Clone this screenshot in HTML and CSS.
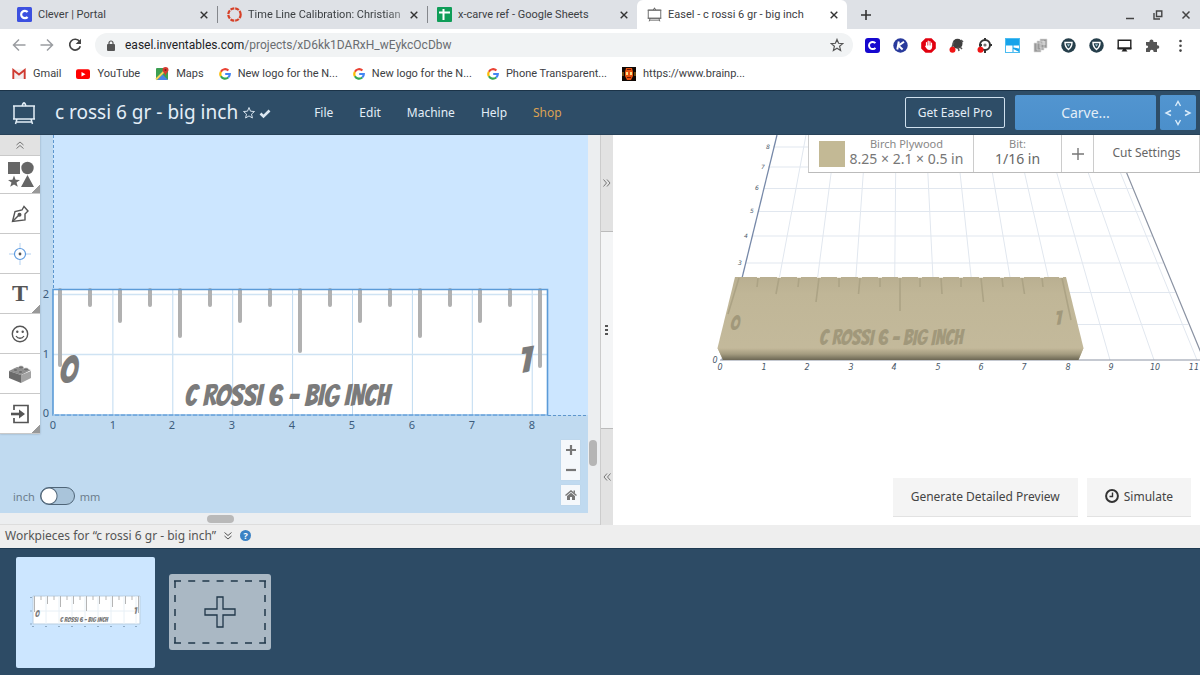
FILE: index.html
```html
<!DOCTYPE html>
<html lang="en">
<head>
<meta charset="utf-8">
<title>Easel - c rossi 6 gr - big inch</title>
<meta name="viewport" content="width=device-width, initial-scale=1">
<link rel="stylesheet" href="styles.css">
</head>
<body>
<svg class="defs" width="0" height="0" aria-hidden="true">
  <defs>
    <symbol id="close" viewBox="0 0 8 8"><path d="M.7.7l6.6 6.6M7.3.7L.7 7.3" stroke="#333" stroke-width="1.4" fill="none"/></symbol>
    <symbol id="google" viewBox="0 0 12 12"><g fill="none" stroke-width="2.2"><path d="M9.4 2.5A4.8 4.8 0 0 0 1.9 3.7" stroke="#ea4335"/><path d="M1.9 3.7a4.8 4.8 0 0 0 0 4.6" stroke="#fbbc05"/><path d="M1.9 8.3a4.8 4.8 0 0 0 7.3 1.2" stroke="#34a853"/><path d="M9.2 9.5A4.5 4.5 0 0 0 10.8 6H6.2" stroke="#4285f4"/></g></symbol>
    <symbol id="shield" viewBox="0 0 15 15"><circle cx="7.5" cy="7.5" r="7.2" fill="#263f4b"/><path d="M4 4.5h7c0 3.500-1.500 5.500-3.500 7C5.500 10 4 8 4 4.500z" fill="none" stroke="#fff" stroke-width="1.400"/><path d="M6 6.200h3L7.500 8.700z" fill="#9fc6d2"/></symbol>
    <symbol id="easel" viewBox="0 0 24 24"><g fill="none" stroke="currentColor" stroke-width="1.500"><path d="M2 5h20v13H2zM1 5h22M1 18h22M5 18l-1.500 5M19 18l1.500 5M4 21h16"/><path d="M10 5l1-2.500h2L14 5M12 1v2"/></g></symbol>
    <linearGradient id="woodEdge" x1="0" y1="0" x2="0" y2="1"><stop offset="0" stop-color="#c4b99b"/><stop offset=".5" stop-color="#a49c80"/><stop offset="1" stop-color="#6c6754"/></linearGradient>
    <linearGradient id="woodTop" x1="0" y1="0" x2="0" y2="1"><stop offset="0" stop-color="#b9af91"/><stop offset=".2" stop-color="#c0b697"/><stop offset="1" stop-color="#c4ba9c"/></linearGradient>
  </defs>
</svg>

<header class="browser">
  <div class="tabstrip">
    <div class="tab">
      <svg class="fav" viewBox="0 0 15 15"><rect width="15" height="15" rx="1.500" fill="#3c50e0"/><path d="M10.600 5A3.700 3.700 0 1 0 10.600 10" fill="none" stroke="#fff" stroke-width="2.200"/></svg>
      <span class="tab-title">Clever | Portal</span>
      <button class="close" aria-label="Close tab"><svg><use href="#close"/></svg></button>
    </div>
    <div class="tab divided">
      <svg class="fav" viewBox="0 0 15 15"><circle cx="7.500" cy="7.500" r="6.200" fill="none" stroke="#d64027" stroke-width="2.200" stroke-dasharray="3.900 .97"/></svg>
      <span class="tab-title fade">Time Line Calibration: Christian</span>
      <button class="close" aria-label="Close tab"><svg><use href="#close"/></svg></button>
    </div>
    <div class="tab divided">
      <svg class="fav" viewBox="0 0 15 15"><rect width="15" height="15" rx="1" fill="#0f9d58"/><path d="M2 5.500h11M6.500 2v11" stroke="#fff" stroke-width="2"/></svg>
      <span class="tab-title">x-carve ref - Google Sheets</span>
      <button class="close" aria-label="Close tab"><svg><use href="#close"/></svg></button>
    </div>
    <div class="tab active">
      <svg class="fav gray"><use href="#easel"/></svg>
      <span class="tab-title">Easel - c rossi 6 gr - big inch</span>
      <button class="close" aria-label="Close tab"><svg><use href="#close"/></svg></button>
    </div>
    <button class="newtab" aria-label="New tab"><svg width="12" height="12"><path d="M6 1v10M1 6h10" stroke="#333" stroke-width="1.600"/></svg></button>
    <div class="window-buttons">
      <button aria-label="Minimize"><svg width="10" height="10"><path d="M1 8.500h8" stroke="#444" stroke-width="1.500"/></svg></button>
      <button aria-label="Restore"><svg width="10" height="10" fill="none" stroke="#444" stroke-width="1.400"><path d="M3.500 1h5.300v5.500H3.500zM1 3v6h6"/></svg></button>
      <button aria-label="Close window"><svg width="10" height="10"><path d="M1.500 1.500l7 7M8.500 1.500l-7 7" stroke="#444" stroke-width="1.500"/></svg></button>
    </div>
  </div>

  <div class="navbar">
    <div class="nav-buttons">
      <button aria-label="Back"><svg width="14" height="14" fill="none" stroke="#9a9da1" stroke-width="1.500"><path d="M13.500 7H1.500M7 1.500L1.500 7L7 12.500"/></svg></button>
      <button aria-label="Forward"><svg width="14" height="14" fill="none" stroke="#9a9da1" stroke-width="1.500"><path d="M.5 7h12M7 1.500L12.500 7L7 12.500"/></svg></button>
      <button aria-label="Reload"><svg width="14" height="14" fill="none" stroke="#444" stroke-width="1.700"><path d="M11.600 3.600A5.400 5.400 0 1 0 12.300 8.200"/><path d="M13 .8v5.300H7.700z" fill="#444" stroke="none"/></svg></button>
    </div>
    <div class="address">
      <svg width="8" height="11"><rect y="4" width="8" height="7" rx="1" fill="#555"/><path d="M2 4.500V3a2 2 0 0 1 4 0v1.500" fill="none" stroke="#555" stroke-width="1.200"/></svg>
      <span class="url"><b>easel.inventables.com</b>/projects/xD6kk1DARxH_wEykcOcDbw</span>
      <button class="star" aria-label="Bookmark this page"><svg width="14" height="14" viewBox="0 0 14 14"><path d="M7 1.400l1.600 3.900 4.200.3-3.200 2.700 1 4.100L7 10.200l-3.600 2.200 1-4.100L1.200 5.600l4.200-.3z" fill="none" stroke="#555" stroke-width="1.200"/></svg></button>
    </div>
    <div class="extensions">
      <svg viewBox="0 0 15 15"><rect width="15" height="15" rx="3" fill="#1608cf"/><path d="M10.400 5.200A3.600 3.600 0 1 0 10.400 9.800" fill="none" stroke="#fff" stroke-width="2"/></svg>
      <svg viewBox="0 0 15 15"><circle cx="7.500" cy="7.500" r="7.200" fill="#293a9c"/><path d="M5.800 3.500L4.300 11.500M11 3.800L5.500 7.700L9.600 11.500" fill="none" stroke="#fff" stroke-width="2"/></svg>
      <svg viewBox="0 0 15 15"><path d="M4.500.2h6l4.300 4.300v6l-4.300 4.300h-6L.2 10.500v-6z" fill="#e1000f"/><path d="M5.500 8V4.500M7.200 8V3.200M8.900 8V3.500M10.500 8.500V5" stroke="#fff" stroke-width="1.200" stroke-linecap="round"/><path d="M4.900 7.500h6.200v1.500c0 2-1.300 3-2.800 3-1.700 0-2.500-1-4.300-3.800z" fill="#fff"/></svg>
      <svg viewBox="0 0 15 15"><circle cx="8.500" cy="5.800" r="5" fill="#3f3f3f"/><path d="M5 4l-2 5M9 9l1 4M12 2l2 2M11 9l2 2" stroke="#555" stroke-width="1.500"/><circle cx="3.500" cy="11.800" r="3" fill="#f01515"/></svg>
      <svg viewBox="0 0 15 15"><circle cx="8" cy="7" r="5" fill="none" stroke="#333" stroke-width="2"/><path d="M8 0v3M12 7h3M8 11v4M2 7h3" stroke="#333" stroke-width="2"/><circle cx="8" cy="7" r="1.600" fill="#777"/><circle cx="3.500" cy="11.800" r="3" fill="#f01515"/></svg>
      <svg viewBox="0 0 15 15"><rect x=".5" y=".5" width="14" height="14" fill="#16a3ea" stroke="#4bbcf1"/><path d="M1 7.500h6.500v6.500H1zM8.500 7.500H14v3l-5.500-1zM8.500 11l5.500 3H8.500z" fill="#fff"/></svg>
      <svg viewBox="0 0 15 15"><path d="M1 5h7v9H1zM4 3h7v9H4zM7 1h7v9H7z" fill="#999" stroke="#ddd" stroke-width=".7"/><path d="M8.500 4h4M8.500 6h4" stroke="#eee"/></svg>
      <svg><use href="#shield"/></svg>
      <svg><use href="#shield"/></svg>
      <svg viewBox="0 0 15 15"><path d="M1.200 2.200h12.600v8H1.200z" fill="#fff" stroke="#222" stroke-width="1.400"/><path d="M.6 9.500h13.800v2H9l1.500 2h-6l1.500-2H.6z" fill="#222"/></svg>
      <svg viewBox="0 0 15 15"><path d="M1 4h3.500C4 1 8.500.5 8.500 4H12v3.200c3-.3 3 3.800 0 3.600V14H8.600c.2-3-3.800-3-3.700 0H1v-3.800c2.800.2 2.800-2.800 0-2.600z" fill="#555"/></svg>
      <svg viewBox="0 0 15 15" fill="#444"><circle cx="7.500" cy="3" r="1.300"/><circle cx="7.500" cy="7.800" r="1.300"/><circle cx="7.500" cy="12.600" r="1.300"/></svg>
    </div>
  </div>

  <nav class="bookmarks" aria-label="Bookmarks">
    <a href="#"><svg viewBox="0 0 14 14"><path d="M1 2.500h12v9.500H1z" fill="#f3eeee"/><path d="M1.300 12V3L7 7.500L12.700 3v9" fill="none" stroke="#cf3a30" stroke-width="1.900"/></svg>Gmail</a>
    <a href="#"><svg viewBox="0 0 14 14"><rect y="2.300" width="14" height="9.800" rx="2" fill="#f00"/><path d="M5.500 5v4.500L9.500 7.200z" fill="#fff"/></svg>YouTube</a>
    <a href="#"><svg viewBox="0 0 14 14"><rect x="1" y="1" width="12" height="12" rx="1" fill="#3c9f52"/><path d="M2 13l5.500-5.500L13 13z" fill="#4a83e8"/><path d="M1 12.500L12 1.500" stroke="#f7d35a" stroke-width="2"/><path d="M10.500 0a3 3 0 0 1 3 3c0 2-2.500 3-3 6-.5-3-3-4-3-6a3 3 0 0 1 3-3z" fill="#d63b30"/><circle cx="10.500" cy="3" r="1" fill="#7d201b"/></svg>Maps</a>
    <a href="#"><svg class="g"><use href="#google"/></svg>New logo for the N...</a>
    <a href="#"><svg class="g"><use href="#google"/></svg>New logo for the N...</a>
    <a href="#"><svg class="g"><use href="#google"/></svg>Phone Transparent...</a>
    <a href="#"><svg viewBox="0 0 14 14"><rect width="14" height="14" fill="#100804"/><path d="M4 1h6l1 4v4l-2 4H5L3 9V5z" fill="#e65310"/><path d="M4 5h2v3H4zM8 5h2v3H8z" fill="#ffe08a"/><path d="M5 2.500h4M5 10.500h4" stroke="#701c06"/><path d="M1 5v4M13 5v4" stroke="#c98a1c"/></svg>https://www.brainp...</a>
  </nav>
</header>

<header class="app-header">
  <svg class="logo"><use href="#easel"/></svg>
  <h1>c rossi 6 gr - big inch</h1>
  <svg class="title-icons" viewBox="0 0 28 14"><path d="M6 1.500l1.500 3.700 4 .3-3 2.600.9 3.900L6 9.900l-3.400 2.100.9-3.900-3-2.600 4-.3z" fill="none" stroke="#d7e3ee" stroke-width="1"/><path d="M17.500 7.500l3 3L26.500 4.500" fill="none" stroke="#dce7f1" stroke-width="2.600"/></svg>
  <nav class="menu" aria-label="Main menu">
    <a href="#">File</a><a href="#">Edit</a><a href="#">Machine</a><a href="#">Help</a><a href="#" class="shop">Shop</a>
  </nav>
  <div class="actions">
    <button class="pro">Get Easel Pro</button>
    <button class="carve">Carve...</button>
    <button class="jog" aria-label="Jog machine"><svg width="28" height="28" fill="none" stroke="#d9ecfb" stroke-width="1.400"><path d="M11.500 7L14 2.500L16.500 7M11.500 21l2.500 4.500L16.500 21M7 11.500L2 14l5 2.500M21 11.500l5 2.500l-5 2.500"/></svg></button>
  </div>
</header>

<main class="workspace">
  <section class="design">
    <div class="canvas">
      <svg class="drawing" viewBox="0 135 588 378" preserveAspectRatio="xMinYMin slice" role="img" aria-label="Ruler design">
        <path d="M0 135h588v378H0z" fill="#c0daf0"/>
        <path d="M53 135h535v280H53z" fill="#cce6ff"/>
        <path d="M53.500 135v155M548 415.500h40" stroke="#5d96cd" stroke-dasharray="3 2"/>
        <path d="M53 289.500h494.500V415H53z" fill="#fff"/>
        <path d="M112.900 290v125M172.800 290v125M232.700 290v125M292.600 290v125M352.500 290v125M412.400 290v125M472.300 290v125M532.200 290v125" stroke="#bfdaf0"/>
        <path d="M53 294.500h494M53 354.500h494" stroke="#cfe3f3" stroke-width="1.500"/>
        <path d="M60 290v75M90 290v15M120 290v31M150 290v15M180 290v46M210 290v15M240 290v31M270 290v15M300 290v61M330 290v15M360 290v31M390 290v15M420 290v46M450 290v15M480 290v31M510 290v15M540 290v76" stroke="#b1b1b1" stroke-width="4" stroke-linecap="round"/>
        <path d="M53 289.500h494.500V415H53z" fill="none" stroke="#5b9bd8" stroke-width="1.600"/>
        <path d="M53 415h494.500" stroke="#c9e0f4" stroke-dasharray="2 4" stroke-width="1"/>
        <g class="engrave">
          <text x="59" y="383" class="digit">0</text>
          <text x="519" y="373" class="digit">1</text>
          <text x="287" y="406" class="phrase" text-anchor="middle">C ROSSI 6 - BIG INCH</text>
        </g>
        <g class="axis" text-anchor="middle">
          <text x="46" y="298">2</text><text x="46" y="358">1</text><text x="46" y="417">0</text>
          <text x="53" y="429">0</text><text x="113" y="429">1</text><text x="172" y="429">2</text><text x="232" y="429">3</text><text x="292" y="429">4</text><text x="352" y="429">5</text><text x="412" y="429">6</text><text x="472" y="429">7</text><text x="532" y="429">8</text>
        </g>
      </svg>

      <div class="toolbox">
        <button class="fold" aria-label="Collapse tools"><svg width="8" height="8" fill="none" stroke="#777"><path d="M.5 4L4 1l3.500 3M.5 7.500L4 4.500l3.500 3"/></svg></button>
        <button class="shapes more" aria-label="Shapes"><svg width="27" height="27" fill="#666"><path d="M1 1h12v12H1z"/><circle cx="20.500" cy="7" r="6.200"/><path d="M7 14.500l1.600 4.200 4.400.2-3.500 2.700 1.300 4.200L7 23.400l-3.800 2.400 1.300-4.200L1 18.900l4.400-.2zM20.500 14l6.500 12H14z"/></svg></button>
        <button aria-label="Pen"><svg width="18" height="18" fill="none" stroke="#555" stroke-width="1.400"><path d="M1.500 16.500L4 6.500l7-1.500 2-3.500L17 6l-3 3v6z"/><path d="M1.500 16.500L8 10"/><circle cx="8.500" cy="9.800" r="1.300" fill="#555"/></svg></button>
        <button aria-label="Drill point"><svg width="24" height="24" fill="none"><path d="M12 1v22M1 12h22" stroke="#b4d1f0"/><circle cx="12" cy="12" r="5.500" stroke="#5d9be0" stroke-width="1.200" fill="#fff"/><circle cx="12" cy="12" r="1.400" fill="#555"/></svg></button>
        <button class="more letter" aria-label="Text">T</button>
        <button aria-label="Icons"><svg width="18" height="18"><circle cx="9" cy="9" r="7.700" fill="none" stroke="#555" stroke-width="1.400"/><circle cx="6.300" cy="6.800" r="1.200" fill="#555"/><circle cx="11.700" cy="6.800" r="1.200" fill="#555"/><path d="M5 11c2 3 6 3 8 0" fill="none" stroke="#555" stroke-width="1.300"/></svg></button>
        <button aria-label="Apps"><svg width="22" height="18"><path d="M0 6l8-4 14 3-10 5z" fill="#8b8b8b"/><path d="M0 6l12 4v8L0 13z" fill="#6b6b6b"/><path d="M12 10l10-4v7l-10 5z" fill="#a3a3a3"/><g fill="#707070" stroke="#aaa" stroke-width=".6"><ellipse cx="6.500" cy="5" rx="2.500" ry="1.500"/><ellipse cx="12" cy="2.500" rx="2.500" ry="1.500"/><ellipse cx="11.500" cy="7" rx="2.500" ry="1.500"/><ellipse cx="17" cy="4.500" rx="2.500" ry="1.500"/></g></svg></button>
        <button class="more" aria-label="Import"><svg width="20" height="20"><path d="M4 6V1.500h14v17H4V14" fill="none" stroke="#555" stroke-width="1.700"/><path d="M1 10h10" stroke="#555" stroke-width="2.600"/><path d="M9 5.500l6 4.500-6 4.500z" fill="#555"/></svg></button>
      </div>

      <div class="units">
        <label for="unit">inch</label>
        <input type="checkbox" id="unit" role="switch" aria-label="Use millimetres">
        <span>mm</span>
      </div>

      <div class="zoom">
        <div class="zoom-pair">
          <button aria-label="Zoom in"><svg width="10" height="10"><path d="M5 0v10M0 5h10" stroke="#777" stroke-width="2.200"/></svg></button>
          <button aria-label="Zoom out"><svg width="10" height="10"><path d="M0 5h10" stroke="#777" stroke-width="2.200"/></svg></button>
        </div>
        <button class="home" aria-label="Fit view"><svg width="12" height="10"><path d="M.5 5.500L6 1l5.500 4.500" fill="none" stroke="#777" stroke-width="1.400"/><path d="M2 6l4-3.200L10 6v4H7V7H5v3H2zM8.500.5H10v3L8.500 2z" fill="#777"/></svg></button>
      </div>
    </div>
    <div class="vscroll"><div class="thumb"></div></div>
    <div class="hscroll"><div class="thumb"></div></div>
  </section>

  <div class="splitter">
    <button class="end top" aria-label="Expand design"><svg width="8" height="8" fill="none" stroke="#777"><path d="M.5.500L3.500 4l-3 3.500M4 .5L7 4L4 7.500"/></svg></button>
    <div class="grip"><svg width="4" height="10" fill="#555"><path d="M0 0h3v2H0zM0 4h3v2H0zM0 8h3v2H0z"/></svg></div>
    <button class="end bottom" aria-label="Expand preview"><svg width="8" height="8" fill="none" stroke="#777"><path d="M4 .5L1 4l3 3.500M7.500.5l-3 3.500 3 3.500"/></svg></button>
  </div>

  <section class="preview">
    <svg class="drawing" viewBox="613 135 587 390" preserveAspectRatio="xMinYMin slice" role="img" aria-label="3D preview of the ruler">
      <path d="M773 147h343M768 167h356M763 188.500h370M758 211.500h384M752 236h400M745 263h418M739 292.500h436M731 324.500h457M806 135L764 360M836 135L807 360M866 135L850 360M896 135L894 360M926 135L937 360M956 135L980 360M986 135L1024 360M1016 135L1067 360M1046 135L1110 360M1075 135L1154 360M1105 135L1197 360" stroke="#e1e7ef" fill="none"/>
      <path d="M777 135L722 360" stroke="#7688a8" stroke-width="1.300"/>
      <path d="M720 360H1204L1111 135" stroke="#8b93a3" stroke-width="1.200" fill="none"/>
      <path d="M735 277h331l17.500 71-5 12H723l-5.500-12z" fill="url(#woodTop)"/>
      <path d="M717.500 348h366l-5 12H723z" fill="url(#woodEdge)"/>
      <g fill="none" stroke="#aca385" stroke-width="1.600">
        <path d="M739 278L728 314M758 278l-1 9M779 278l-3 16M799 278l-1 9M819 278l-3 24M839 278v9M860 278l-1.500 16M880 278v9M900 278v33M920 278v9M941 278l1 16M961 278v9M981 278l2.500 24M1002 278l1 9M1022 278l2.500 16M1042 278l1 9M1062 278l9 42"/>
      </g>
      <path d="M757 277.500h3M777 277.500h4M797 277.500h4M817 277.500h4M837 277.500h4M858 277.500h4M878 277.500h4M898 277.500h4M918 277.500h4M939 277.500h4M959 277.500h4M979 277.500h4M1000 277.500h4M1020 277.500h4M1040 277.500h4M1059 277.500h4" stroke="#efebdf"/>
      <g class="relief">
        <text x="730" y="330" class="relief-digit">0</text>
        <text x="1055" y="325" class="relief-digit">1</text>
        <text x="891" y="345" class="relief-phrase" text-anchor="middle">C ROSSI 6 - BIG INCH</text>
      </g>
      <g class="axis3d side" text-anchor="middle">
        <text x="768" y="149">8</text><text x="763" y="169">7</text><text x="757" y="190">6</text><text x="752" y="213">5</text><text x="746" y="238">4</text><text x="740" y="265">3</text>
      </g>
      <g class="axis3d" text-anchor="middle">
        <text x="715" y="363">0</text>
        <text x="720" y="370">0</text><text x="764" y="370">1</text><text x="807" y="370">2</text><text x="851" y="370">3</text><text x="894" y="370">4</text><text x="938" y="370">5</text><text x="981" y="370">6</text><text x="1024" y="370">7</text><text x="1068" y="370">8</text><text x="1111" y="370">9</text><text x="1155" y="370">10</text><text x="1199" y="370" text-anchor="end">11</text>
      </g>
    </svg>

    <div class="settings">
      <button class="material"><span class="swatch"></span><span class="stack"><small>Birch Plywood</small><span>8.25 × 2.1 × 0.5 in</span></span></button>
      <button class="bit"><span class="stack"><small>Bit:</small><span>1/16 in</span></span></button>
      <button class="add-bit" aria-label="Add bit"><svg width="12" height="12"><path d="M6 0v12M0 6h12" stroke="#777" stroke-width="1.400"/></svg></button>
      <button class="cut">Cut Settings</button>
    </div>

    <div class="preview-actions">
      <button>Generate Detailed Preview</button>
      <button><svg width="14" height="14" fill="none" stroke="#333"><circle cx="7" cy="7" r="5.900" stroke-width="2"/><path d="M7.500 3.500v4H4.500" stroke-width="1.400"/></svg>Simulate</button>
    </div>
  </section>
</main>

<section class="workpieces">
  <div class="wp-bar">
    <h2>Workpieces for “c rossi 6 gr - big inch”</h2>
    <svg width="8" height="8" fill="none" stroke="#555"><path d="M.5.500L4 3.500L7.500.5M.5 4L4 7l3.500-3"/></svg>
    <button class="help" aria-label="Help">?</button>
  </div>
  <div class="wp-list">
    <button class="wp-card" aria-label="Workpiece 1">
      <svg width="112" height="36" viewBox="0 0 112 36">
        <path d="M3 2h107v28H3z" fill="#fff" stroke="#b9cfe2"/>
        <path d="M16 2v28M29 2v28M42 2v28M55 2v28M68 2v28M81 2v28M94 2v28M106 2v28M3 17h107" stroke="#e8f0f6"/>
        <path d="M4.500 2v16M11 2v4M17.500 2v8M24 2v4M30.500 2v11M37 2v4M43.500 2v8M50 2v4M56.500 2v15M63 2v4M69.500 2v8M76 2v4M82.500 2v11M89 2v4M95.500 2v8M102 2v4M108.500 2v17" stroke="#b5b5b5"/>
        <path d="M2 32.500h2M15 32.500h2M28 32.500h2M41 32.500h2M54 32.500h2M67 32.500h2M80 32.500h2M93 32.500h2M105 32.500h2M0 3.500h2M0 17h2M0 30h2" stroke="#8faac2"/>
        <g class="engrave mini"><text x="5" y="23" class="mini-digit">0</text><text x="104" y="20" class="mini-digit">1</text><text x="54" y="28" text-anchor="middle" class="mini-phrase">C ROSSI 6 - BIG INCH</text></g>
      </svg>
    </button>
    <button class="wp-add" aria-label="Add workpiece">
      <svg width="92" height="64" fill="none" stroke="#20374a"><path d="M0 1h92M0 63h92" stroke-width="1.500" stroke-dasharray="7 7.200"/><path d="M1 1v62M91 1v62" stroke-width="1.500" stroke-dasharray="7 7"/><path d="M43 17h6v12h12v6H49v12h-6V35H31v-6h12z" stroke-width="1.300"/></svg>
    </button>
  </div>
</section>
</body>
</html>
```

FILE: styles.css
```css
* { box-sizing: border-box; }
body {
  margin: 0;
  min-height: 100vh;
  display: flex;
  flex-direction: column;
  font-family: "Noto Sans", sans-serif;
  color: #555;
}
button {
  margin: 0;
  padding: 0;
  border: 0;
  background: none;
  font: inherit;
  color: inherit;
  display: flex;
  align-items: center;
  justify-content: center;
}
svg { display: block; flex: none; }
a { color: inherit; text-decoration: none; }
.defs { position: absolute; }

/* Browser chrome */
.browser {
  background: #fff;
  font-family: Roboto, sans-serif;
  font-size: 11px;
  color: #3c4043;
}
.tabstrip {
  display: flex;
  height: 29px;
  padding-left: 7px;
  background: #dee1e6;
}
.tab {
  flex: 0 1 210px;
  min-width: 0;
  display: flex;
  align-items: center;
  gap: 6px;
  padding: 0 9px 0 10px;
}
.divided {
  background: linear-gradient(#84878c, #84878c) 0 center / 1px 17px no-repeat;
}
.active { background: #fff; border-radius: 6px 6px 0 0; }
.tab-title {
  flex: 1;
  min-width: 0;
  overflow: hidden;
  white-space: nowrap;
}
.fade {
  margin-right: -6px;
  -webkit-mask-image: linear-gradient(90deg, #000 85%, transparent 105%);
  mask-image: linear-gradient(90deg, #000 85%, transparent 105%);
}
.fav { width: 15px; height: 15px; }
.gray { color: #666; }
.close svg { width: 8px; height: 8px; }
.newtab { width: 38px; }
.window-buttons {
  margin-left: auto;
  display: flex;
  gap: 18px;
  padding-right: 9px;
}
.navbar {
  display: flex;
  align-items: center;
  height: 32px;
  padding: 0 12px;
}
.nav-buttons { display: flex; gap: 14px; }
.address {
  flex: 1;
  display: flex;
  align-items: center;
  gap: 10px;
  height: 24px;
  margin: 0 12px 0 13px;
  padding: 0 9px 0 12px;
  border-radius: 12px;
  background: #f1f3f4;
  color: #6a6d71;
}
.address b { font-weight: 400; color: #202124; }
.url { flex: 1; font-size: 12px; }
.extensions { display: flex; gap: 13px; }
.extensions svg { width: 15px; height: 15px; }
.bookmarks {
  display: flex;
  align-items: center;
  gap: 15px;
  height: 29px;
  padding: 0 12px 4px;
}
.bookmarks a { display: flex; align-items: center; gap: 7px; white-space: nowrap; }
.bookmarks svg { width: 14px; height: 14px; }
.bookmarks .g { width: 12px; height: 12px; }

/* Application header */
.app-header {
  display: flex;
  align-items: center;
  height: 45px;
  padding: 0 4px 0 12px;
  background: #2e4d67;
  border-top: 1px solid #1b3348;
  border-bottom: 1px solid #274259;
  color: #e3eef7;
}
.logo { width: 24px; height: 24px; }
h1 {
  margin: 0 5px 2px 19px;
  font-size: 19px;
  font-weight: 400;
  white-space: nowrap;
}
.title-icons { width: 28px; height: 14px; }
.menu { display: flex; gap: 26px; margin-left: 43px; font-size: 12px; }
.shop { color: #dca253; }
.actions { display: flex; align-items: center; margin-left: auto; }
.pro {
  width: 100px;
  height: 31px;
  margin-right: 10px;
  border: 1px solid #cfe0ee;
  border-radius: 2px;
  font-size: 12px;
}
.carve, .jog {
  height: 35px;
  border-radius: 2px;
  background: linear-gradient(#5295d0, #4b8fcb);
}
.carve { width: 141px; margin-right: 4px; font-size: 14px; }
.jog { width: 36px; }

/* Workspace */
.workspace {
  flex: 1 0 390px;
  display: flex;
  background: #fff;
}
.design {
  flex: 0 0 50%;
  display: grid;
  grid-template: 1fr 12px / 1fr 12px;
  background: #eceef0;
}
.canvas {
  position: relative;
  overflow: hidden;
  background: #c0daf0;
}
.drawing { position: absolute; inset: 0; width: 100%; height: 100%; }
.engrave, .relief {
  font-family: "Bangers", "Bebas Neue", "Roboto Condensed", Roboto, sans-serif;
  font-weight: 400;
  fill: #7b7b7b;
}
.digit { font-size: 38px; }
.phrase { font-size: 30px; }
.axis { font-size: 11px; fill: #3c5c7c; }
.toolbox {
  position: relative;
  width: 40px;
  background: #fff;
  box-shadow: 0 0 2px #8fa6b9;
}
.toolbox button {
  position: relative;
  width: 100%;
  height: 40px;
  border-bottom: 1px solid #c9c9c9;
}
.toolbox .fold { height: 21px; background: #e2e2e2; }
.toolbox .shapes { height: 38px; }
.letter { font-family: "Liberation Serif", serif; font-size: 24px; font-weight: 700; }
.more { background: linear-gradient(135deg, transparent 50%, #999 50%) right bottom / 8px 8px no-repeat; }
.units {
  position: absolute;
  left: 13px;
  bottom: 8px;
  display: flex;
  align-items: center;
  gap: 5px;
  font-size: 11px;
  color: #6c7d8c;
}
.units input {
  appearance: none;
  width: 35px;
  height: 18px;
  margin: 0;
  border: 1px solid #4f6578;
  border-radius: 9px;
  background: radial-gradient(circle at 8px 8px, #fff 7px, #4f6578 8px, transparent 9px), #a9c4da;
}
.zoom {
  position: absolute;
  right: 8px;
  bottom: 8px;
  display: flex;
  flex-direction: column;
  gap: 5px;
}
.zoom-pair, .home { width: 19px; background: #f5f8fb; box-shadow: 0 0 1px #b9cbd9; }
.zoom button { width: 19px; height: 20px; }
.vscroll { position: relative; }
.vscroll .thumb {
  position: absolute;
  right: 3px;
  bottom: 47px;
  width: 8px;
  height: 26px;
  border-radius: 4px;
  background: #b5b5b5;
}
.hscroll { grid-column: 1 / 3; border-bottom: 1px solid #ddd; }
.hscroll .thumb {
  width: 27px;
  height: 8px;
  margin: 2px 0 0 207px;
  border-radius: 4px;
  background: #b9b9b9;
}
.splitter {
  flex: 0 0 13px;
  display: flex;
  flex-direction: column;
  border-left: 1px solid #ccc;
  background: #f4f5f6;
}
.end { flex: 0 0 97px; background: #e2e2e2; }
.top { border-bottom: 1px solid #bbb; }
.bottom { border-top: 1px solid #bbb; }
.grip { flex: 1; display: flex; align-items: center; justify-content: center; }
.preview { flex: 1; position: relative; overflow: hidden; }
.relief { fill: #a1987b; }
.relief-digit { font-size: 20px; }
.relief-phrase { font-size: 21px; }
.axis3d { font: italic 8px "DejaVu Sans", sans-serif; fill: #4a5868; }
.side { font-size: 6px; }
.settings {
  position: absolute;
  top: 0;
  right: 0;
  display: flex;
  height: 38px;
  background: #fff;
  border-left: 1px solid #ccc;
  border-bottom: 1px solid #bbb;
}
.settings button { border-right: 1px solid #ccc; font-size: 14px; color: #666; }
.stack { display: flex; flex-direction: column; align-items: center; line-height: 16px; padding-bottom: 4px; }
.stack small { font-size: 11px; line-height: 15px; color: #888; }
.material { width: 165px; gap: 5px; }
.settings .material { color: #777; }
.swatch { width: 26px; height: 26px; background: #c3b995; }
.bit { width: 88px; }
.add-bit { width: 32px; }
.cut { width: 106px; }
.settings .cut { font-size: 12px; padding-bottom: 2px; }
.preview-actions {
  position: absolute;
  right: 9px;
  bottom: 8px;
  display: flex;
  gap: 9px;
}
.preview-actions button {
  height: 39px;
  padding: 0 18px 2px;
  gap: 5px;
  background: #f4f4f4;
  border-bottom: 1px solid #e2e2e2;
  font-size: 12px;
  color: #444;
}

/* Workpieces */
.wp-bar {
  display: flex;
  align-items: center;
  gap: 8px;
  height: 23px;
  padding: 0 5px 2px;
  background: #eee;
}
h2 { margin: 0; font-size: 12px; font-weight: 400; }
.help {
  width: 11px;
  height: 11px;
  border-radius: 50%;
  background: #3b82c4;
  color: #fff;
  font-size: 9px;
  font-weight: 700;
}
.wp-list {
  display: flex;
  align-items: center;
  gap: 14px;
  height: 127px;
  padding: 0 16px;
  background: #2d4b65;
  border-top: 1px solid #1e3a52;
}
.wp-card {
  width: 139px;
  height: 111px;
  border-radius: 2px;
  background: #cce6ff;
}
.wp-add {
  width: 102px;
  height: 76px;
  border-radius: 3px;
  background: #aab8c4;
}
.mini-digit { font-size: 9px; }
.mini-phrase { font-size: 7px; }
```
